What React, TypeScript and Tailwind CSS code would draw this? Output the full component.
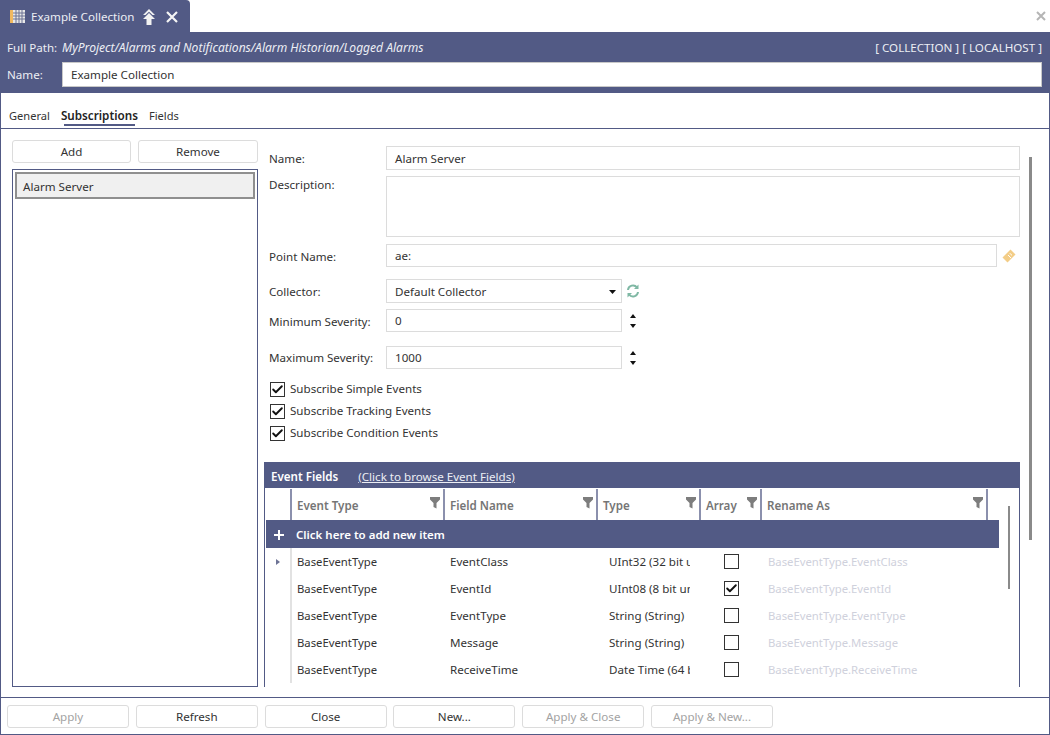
import { Check } from "lucide-react"

const rows = [
  { field: "EventClass", type: "UInt32 (32 bit unsigned)", checked: false, arrow: true },
  { field: "EventId", type: "UInt08 (8 bit unsigned)", checked: true, arrow: false },
  { field: "EventType", type: "String (String)", checked: false, arrow: false },
  { field: "Message", type: "String (String)", checked: false, arrow: false },
  { field: "ReceiveTime", type: "Date Time (64 bit)", checked: false, arrow: false },
]

const Btn = ({ label, disabled }: { label: string; disabled?: boolean }) => (
  <div
    className={`flex h-[23px] w-[122px] items-center justify-center rounded-[3px] border border-[#dcdcdc] pt-[1px] ${
      disabled ? "text-[#a3a3a3]" : "text-[#333333]"
    }`}
  >
    {label}
  </div>
)

const Field = ({ className, children }: { className: string; children?: React.ReactNode }) => (
  <div className={`flex items-center border border-[#dcdcdc] px-[8px] pt-[1px] text-[#333333] ${className}`}>{children}</div>
)

const Box = ({ checked, className }: { checked: boolean; className: string }) => (
  <div className={`flex items-center justify-center border border-[#333333] bg-white ${className}`}>
    {checked && <Check size={13} strokeWidth={3.5} className="text-[#111111]" />}
  </div>
)

const Filter = () => (
  <svg width="10" height="12" viewBox="0 0 10 12" className="absolute right-[3px] top-[8px]">
    <path d="M0 0H10V2.5L6.5 6V11.5L3.5 10V6L0 2.5Z" fill="#7d7d7d" />
  </svg>
)

const Spinner = () => (
  <div className="ml-[8px] flex flex-col gap-[6px]">
    <svg width="6" height="4" viewBox="0 0 6 4"><path d="M3 0L6 4H0Z" fill="#111111" /></svg>
    <svg width="6" height="4" viewBox="0 0 6 4"><path d="M0 0H6L3 4Z" fill="#111111" /></svg>
  </div>
)

const HeadCell = ({ label, className }: { label: string; className: string }) => (
  <div className={`relative flex items-center border-r-2 border-[#8b90ad] pl-[5px] pt-[2px] font-semibold text-[#757575] ${className}`}>
    {label}
    <Filter />
  </div>
)

const CheckRow = ({ label }: { label: string }) => (
  <div className="flex h-[16px] items-center gap-[5px] pl-[6px] text-[#333333]">
    <Box checked className="h-[15px] w-[15px]" />
    {label}
  </div>
)

export default function App() {
  return (
    <div className="flex h-[735px] w-[1050px] flex-col overflow-hidden bg-white text-[11.6px] font-['Noto_Sans',sans-serif]">
      <div className="flex h-[32px] shrink-0 items-start justify-between">
        <div className="flex h-[32px] w-[190px] items-center rounded-tr-[4px] bg-[#525a85] pl-[10px] text-[#eceef4]">
          <svg width="15" height="15" viewBox="0 0 15 15">
            <rect x="0" y="1" width="3" height="13" fill="#f0b860" />
            <rect x="3" y="1" width="12" height="13" fill="#e8e8e8" />
            <path d="M6 1V14M9 1V14M12 1V14M3 4H15M3 7H15M3 10H15" stroke="#6d7395" strokeWidth="1" />
          </svg>
          <span className="ml-[6px] pt-[1px]">Example Collection</span>
          <svg width="14" height="16" viewBox="0 0 14 16" className="ml-[8px] mt-[2px]">
            <path d="M7 0L13 6H10.5L7 2.8L3.5 6H1Z" fill="#f2f2f2" />
            <path d="M7 4L13 10H9.5V16H4.5V10H1Z" fill="#f2f2f2" />
          </svg>
          <svg width="12" height="12" viewBox="0 0 12 12" className="ml-[10px] mt-[2px]">
            <path d="M1 1L11 11M11 1L1 11" stroke="#f5f5f5" strokeWidth="2.2" />
          </svg>
        </div>
        <svg width="10" height="10" viewBox="0 0 10 10" className="mr-[4px] mt-[11px]">
          <path d="M1 1L9 9M9 1L1 9" stroke="#b5b5b5" strokeWidth="2" />
        </svg>
      </div>

      <div className="flex h-[61px] shrink-0 flex-col bg-[#525a85] px-[7px] text-[#eceef4]">
        <div className="flex h-[30px] items-center justify-between pt-[2px] pr-[1px]">
          <div className="flex items-center">
            <span className="w-[55px]">Full Path:</span>
            <span className="text-[12.05px] italic">MyProject/Alarms and Notifications/Alarm Historian/Logged Alarms</span>
          </div>
          <span>[ COLLECTION ] [ LOCALHOST ]</span>
        </div>
        <div className="flex items-center">
          <span className="w-[55px] pt-[1px]">Name:</span>
          <div className="flex h-[25px] w-[980px] items-center border border-[#c8c8c8] bg-white pl-[8px] pt-[1px] text-[#333333]">
            Example Collection
          </div>
        </div>
      </div>

      <div className="flex min-h-0 flex-1 flex-col border-x border-b border-[#525a85]">
        <div className="flex h-[36px] shrink-0 items-end gap-[11px] border-b border-[#525a85] pb-[3px] pl-[8px] text-[11.1px] text-[#333333]">
          <span>General</span>
          <span className="relative text-[11.7px] font-semibold text-[#222222]">
            Subscriptions
            <span className="absolute -bottom-[1px] left-[3px] right-[3px] h-[2px] bg-[#525a85]" />
          </span>
          <span>Fields</span>
        </div>

        <div className="relative flex min-h-0 flex-1">
          <div className="flex w-[262px] shrink-0 flex-col pl-[11px] pt-[11px]">
            <div className="flex gap-[7px] text-[#333333]">
              <div className="flex h-[23px] w-[119px] items-center justify-center rounded-[3px] border border-[#dcdcdc] pt-[1px]">Add</div>
              <div className="flex h-[23px] w-[120px] items-center justify-center rounded-[3px] border border-[#dcdcdc] pt-[1px]">Remove</div>
            </div>
            <div className="mt-[6px] flex h-[518px] w-[246px] flex-col border border-[#525a85] p-[2px]">
              <div className="flex h-[27px] items-center border-2 border-[#8f8f8f] bg-[#f0f0f0] pl-[6px] pt-[2px] text-[#333333]">Alarm Server</div>
            </div>
          </div>

          <div className="flex w-[757px] shrink-0 flex-col pl-[1px] pt-[17px] text-[#333333]">
            <div className="flex items-center">
              <span className="w-[122px] pl-[5px] pt-[1px]">Name:</span>
              <Field className="h-[24px] w-[634px]">Alarm Server</Field>
            </div>
            <div className="mt-[6px] flex items-start">
              <span className="w-[122px] pl-[5px]">Description:</span>
              <Field className="h-[61px] w-[634px]" />
            </div>
            <div className="mt-[7px] flex items-center">
              <span className="w-[122px] pl-[5px] pt-[2px]">Point Name:</span>
              <Field className="h-[23px] w-[611px]">ae:</Field>
              <svg width="14" height="14" viewBox="0 0 14 14" className="ml-[5px]">
                <path d="M8.5 0.5L13.5 5.5L5.5 13.5L0.5 8.5Z" fill="#f3cd87" />
                <path d="M6 6L9 9M7.8 4.2L10 6.4" stroke="#fff" strokeWidth="1" />
              </svg>
            </div>
            <div className="mt-[12px] flex items-center">
              <span className="w-[122px] pl-[5px] pt-[1px]">Collector:</span>
              <Field className="h-[24px] w-[236px] justify-between pr-[5px]">
                Default Collector
                <svg width="7" height="4" viewBox="0 0 7 4"><path d="M0 0H7L3.5 4Z" fill="#111111" /></svg>
              </Field>
              <svg width="14" height="14" viewBox="0 0 14 14" className="ml-[4px]" fill="none" stroke="#7fb8a4" strokeWidth="2">
                <path d="M2 6A5 5 0 0 1 11 3.5" />
                <path d="M12 8A5 5 0 0 1 3 10.5" />
                <path d="M12.5 0.5V5H8Z" fill="#7fb8a4" strokeWidth="0" />
                <path d="M1.5 13.5V9H6Z" fill="#7fb8a4" strokeWidth="0" />
              </svg>
            </div>
            <div className="mt-[6px] flex items-center">
              <span className="w-[122px] pl-[5px] pt-[2px]">Minimum Severity:</span>
              <Field className="h-[23px] w-[236px]">0</Field>
              <Spinner />
            </div>
            <div className="mt-[14px] flex items-center">
              <span className="w-[122px] pl-[5px]">Maximum Severity:</span>
              <Field className="h-[23px] w-[236px]">1000</Field>
              <Spinner />
            </div>
            <div className="mt-[12px] flex flex-col gap-[6px]">
              <CheckRow label="Subscribe Simple Events" />
              <CheckRow label="Subscribe Tracking Events" />
              <CheckRow label="Subscribe Condition Events" />
            </div>

            <div className="mt-[21px] flex min-h-0 flex-1 flex-col">
              <div className="flex h-[26px] shrink-0 items-center gap-[20px] bg-[#525a85] pl-[7px] pt-[3px] text-[#eceef4]">
                <span className="font-semibold text-white">Event Fields</span>
                <span className="underline">(Click to browse Event Fields)</span>
              </div>
              <div className="relative mb-[10px] min-h-0 flex-1 overflow-hidden border-x border-[#525a85] pl-[1px]">
                <div className="flex h-[32px] pt-[1px]">
                  <div className="w-[26px] border-r-2 border-[#8b90ad]" />
                  <HeadCell label="Event Type" className="w-[153px]" />
                  <HeadCell label="Field Name" className="w-[153px]" />
                  <HeadCell label="Type" className="w-[103px]" />
                  <HeadCell label="Array" className="w-[61px]" />
                  <HeadCell label="Rename As" className="w-[226px]" />
                </div>
                <div className="flex h-[28px] w-[733px] items-center bg-[#525a85] pt-[2px] text-[11.5px] font-semibold text-white">
                  <svg width="10" height="10" viewBox="0 0 10 10" className="ml-[8px]">
                    <path d="M5 0V10M0 5H10" stroke="#ffffff" strokeWidth="2" />
                  </svg>
                  <span className="ml-[12px]">Click here to add new item</span>
                </div>
                {rows.map((r) => (
                  <div key={r.field} className="flex h-[27px] items-center text-[#333333]">
                    <div className="flex h-full w-[26px] items-center justify-center border-r-2 border-[#e2e2e2]">
                      {r.arrow && <svg width="4" height="6" viewBox="0 0 4 6"><path d="M0 0L4 3L0 6Z" fill="#6d7395" /></svg>}
                    </div>
                    <div className="w-[153px] pl-[5px] pt-[2px] text-[11.3px]">BaseEventType</div>
                    <div className="w-[159px] pl-[5px]">{r.field}</div>
                    <div className="w-[86px] overflow-hidden whitespace-nowrap pl-[5px]">{r.type}</div>
                    <div className="w-[72px] pl-[34px]">
                      <Box checked={r.checked} className="h-[15px] w-[15px]" />
                    </div>
                    <div className="pl-[6px] pt-[2px] text-[11.3px] text-[#cfd1dc]">BaseEventType.{r.field}</div>
                  </div>
                ))}
                <div className="absolute left-[743px] top-[18px] h-[83px] w-[2px] bg-[#8a8a8a]" />
              </div>
            </div>
          </div>

          <div className="absolute left-[1028px] top-[28px] h-[383px] w-[3px] bg-[#8a8a8a]" />
        </div>

        <div className="flex h-[37px] shrink-0 items-center gap-[6.8px] border-t border-[#525a85] pl-[6px]">
          <Btn label="Apply" disabled />
          <Btn label="Refresh" />
          <Btn label="Close" />
          <Btn label="New..." />
          <Btn label="Apply & Close" disabled />
          <Btn label="Apply & New..." disabled />
        </div>
      </div>
    </div>
  )
}
